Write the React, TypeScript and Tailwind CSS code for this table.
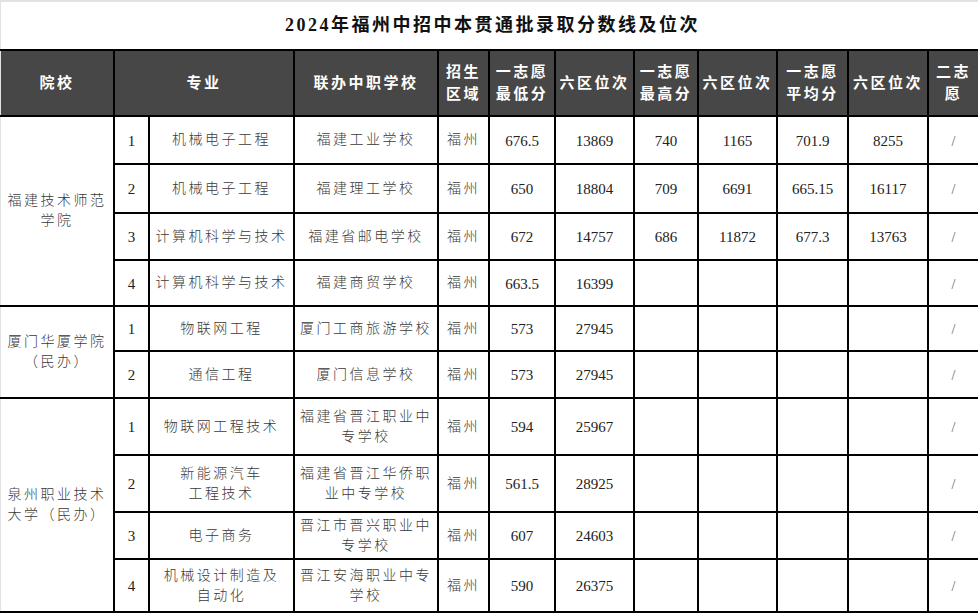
import React from "react";

const FONT = "font-['Liberation_Serif','Noto_Sans_CJK_SC',serif]";

type Row = {
  school?: { label: React.ReactNode; span: number };
  no: number;
  major: React.ReactNode;
  partner: React.ReactNode;
  region: string;
  min: string;
  minRank: string;
  max?: string;
  maxRank?: string;
  avg?: string;
  avgRank?: string;
  h: string;
};

const rows: Row[] = [
  {
    school: { label: <>福建技术师范<br />学院</>, span: 4 },
    no: 1, major: "机械电子工程", partner: "福建工业学校", region: "福州",
    min: "676.5", minRank: "13869", max: "740", maxRank: "1165", avg: "701.9", avgRank: "8255", h: "h-[48px]",
  },
  {
    no: 2, major: "机械电子工程", partner: "福建理工学校", region: "福州",
    min: "650", minRank: "18804", max: "709", maxRank: "6691", avg: "665.15", avgRank: "16117", h: "h-[49px]",
  },
  {
    no: 3, major: "计算机科学与技术", partner: "福建省邮电学校", region: "福州",
    min: "672", minRank: "14757", max: "686", maxRank: "11872", avg: "677.3", avgRank: "13763", h: "h-[47px]",
  },
  {
    no: 4, major: "计算机科学与技术", partner: "福建商贸学校", region: "福州",
    min: "663.5", minRank: "16399", h: "h-[46px]",
  },
  {
    school: { label: <>厦门华厦学院<br />（民办）</>, span: 2 },
    no: 1, major: "物联网工程", partner: "厦门工商旅游学校", region: "福州",
    min: "573", minRank: "27945", h: "h-[45px]",
  },
  {
    no: 2, major: "通信工程", partner: "厦门信息学校", region: "福州",
    min: "573", minRank: "27945", h: "h-[47px]",
  },
  {
    school: { label: <>泉州职业技术<br />大学（民办）</>, span: 4 },
    no: 1, major: "物联网工程技术", partner: <>福建省晋江职业中<br />专学校</>, region: "福州",
    min: "594", minRank: "25967", h: "h-[57px]",
  },
  {
    no: 2, major: <>新能源汽车<br />工程技术</>, partner: <>福建省晋江华侨职<br />业中专学校</>, region: "福州",
    min: "561.5", minRank: "28925", h: "h-[57px]",
  },
  {
    no: 3, major: "电子商务", partner: <>晋江市晋兴职业中<br />专学校</>, region: "福州",
    min: "607", minRank: "24603", h: "h-[47px]",
  },
  {
    no: 4, major: <>机械设计制造及<br />自动化</>, partner: <>晋江安海职业中专<br />学校</>, region: "福州",
    min: "590", minRank: "26375", h: "h-[53px]",
  },
];

const td = "border-2 border-black text-center align-middle p-0";
const th = "border-2 border-black text-center align-middle p-0 font-bold text-white text-[15px] leading-[22px] tracking-[2.5px]";
const cjk = "text-[14px] leading-[20px] tracking-[2.5px] font-light text-[#3a3a3a]";
const num = "text-[15px] text-[#222] pt-[2px]";

export default function App() {
  return (
    <div className={`w-[978px] h-[613px] bg-white overflow-hidden ${FONT}`}>
      <table className="table-fixed border-collapse w-[979px] -ml-px">
        <colgroup>
          <col className="w-[114px]" />
          <col className="w-[35px]" />
          <col className="w-[145px]" />
          <col className="w-[144px]" />
          <col className="w-[51px]" />
          <col className="w-[66px]" />
          <col className="w-[79px]" />
          <col className="w-[64px]" />
          <col className="w-[79px]" />
          <col className="w-[71px]" />
          <col className="w-[80px]" />
          <col className="w-[51px]" />
        </colgroup>
        <tbody>
          <tr className="h-[49px]">
            <td
              colSpan={12}
              className="border-2 border-black border-t-[#e2e2e2] border-l-[#e2e2e2] text-center align-middle text-[18px] font-bold tracking-[2.5px] text-[#111] pl-[6px]"
            >
              2024年福州中招中本贯通批录取分数线及位次
            </td>
          </tr>
          <tr className="h-[66px] bg-[#474747]">
            <th className={`${th} border-l-[#e2e2e2]`}>院校</th>
            <th colSpan={2} className={th}>专业</th>
            <th className={th}>联办中职学校</th>
            <th className={th}>招生<br />区域</th>
            <th className={th}>一志愿<br />最低分</th>
            <th className={th}>六区位次</th>
            <th className={th}>一志愿<br />最高分</th>
            <th className={th}>六区位次</th>
            <th className={th}>一志愿<br />平均分</th>
            <th className={th}>六区位次</th>
            <th className={th}>二志<br />愿</th>
          </tr>
          {rows.map((r, i) => (
            <tr key={i} className={r.h}>
              {r.school && (
                <td rowSpan={r.school.span} className={`${td} border-l-[#e2e2e2] ${cjk}`}>
                  {r.school.label}
                </td>
              )}
              <td className={`${td} ${num}`}>{r.no}</td>
              <td className={`${td} ${cjk}`}>{r.major}</td>
              <td className={`${td} ${cjk}`}>{r.partner}</td>
              <td className={`${td} ${cjk}`}>{r.region}</td>
              <td className={`${td} ${num}`}>{r.min}</td>
              <td className={`${td} ${num}`}>{r.minRank}</td>
              <td className={`${td} ${num}`}>{r.max ?? ""}</td>
              <td className={`${td} ${num}`}>{r.maxRank ?? ""}</td>
              <td className={`${td} ${num}`}>{r.avg ?? ""}</td>
              <td className={`${td} ${num}`}>{r.avgRank ?? ""}</td>
              <td className={`${td} text-[14px] text-[#666] pt-[2px]`}>/</td>
            </tr>
          ))}
        </tbody>
      </table>
    </div>
  );
}
